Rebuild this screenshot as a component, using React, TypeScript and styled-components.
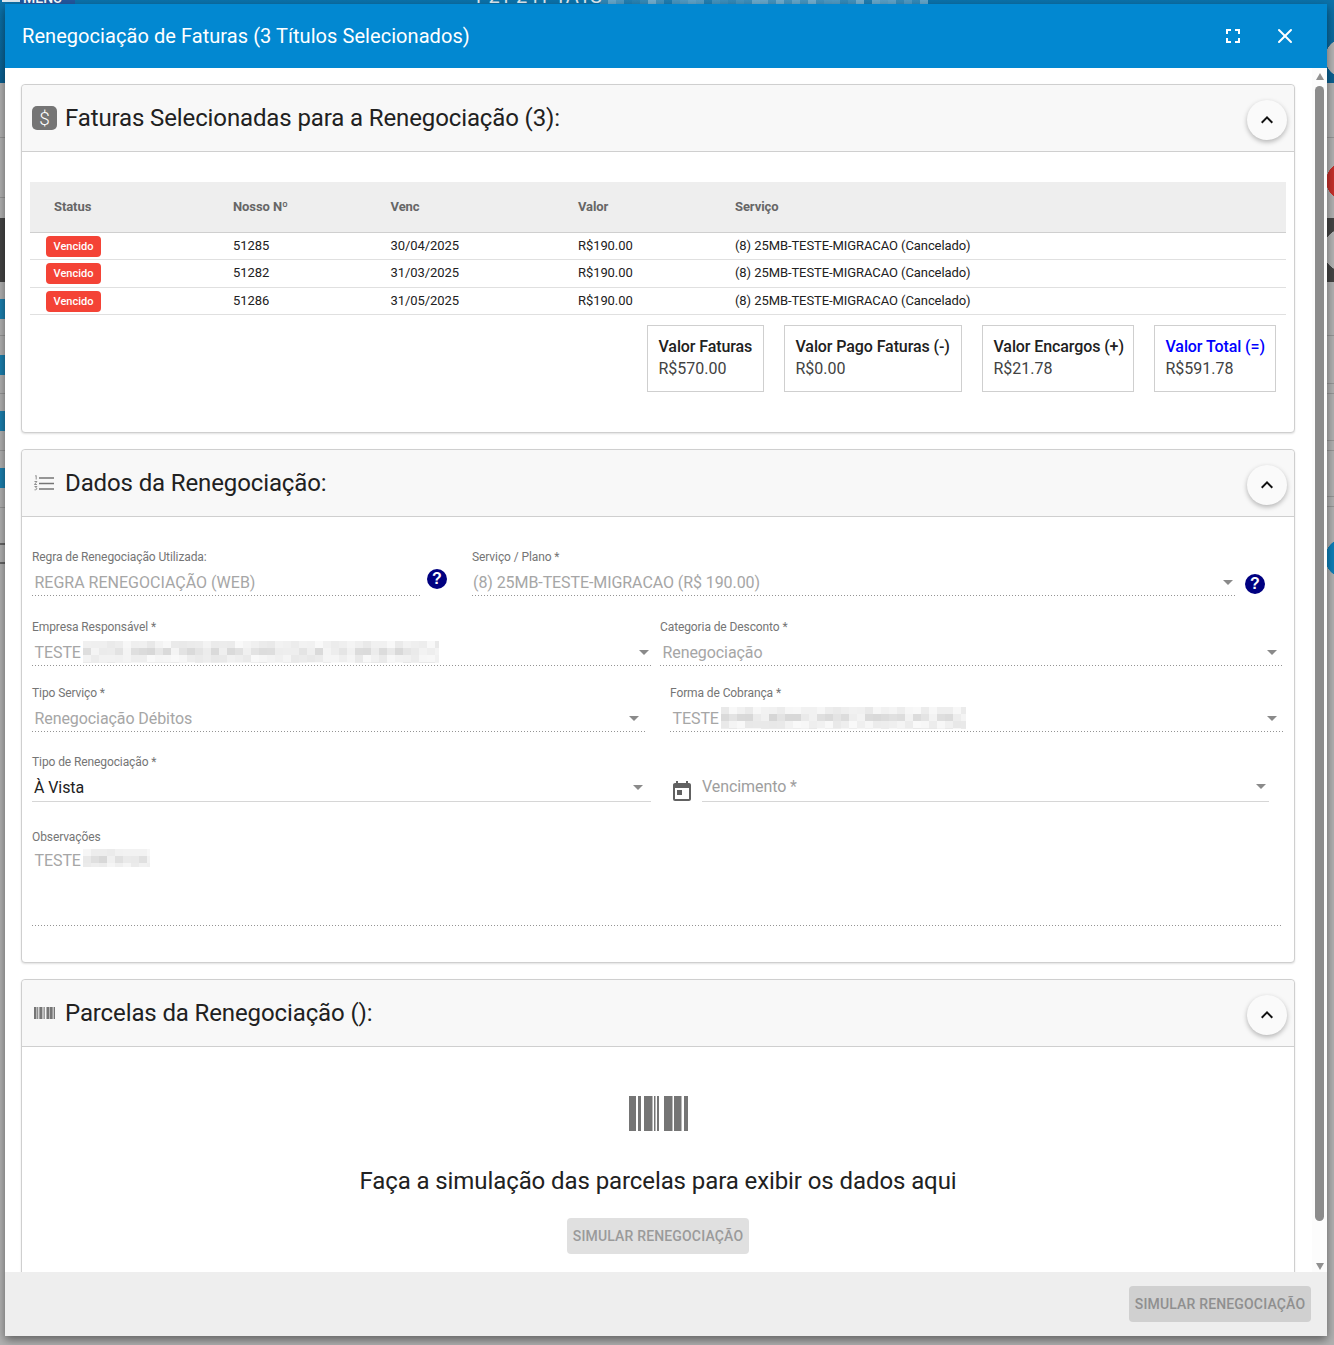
import React from "react";
import styled, { createGlobalStyle } from "styled-components";
import { X } from "lucide-react";
import { MdExpandLess, MdFullscreen, MdToday } from "react-icons/md";

const GlobalStyle = createGlobalStyle`
  html, body {
    margin: 0;
    padding: 0;
  }
  body {
    width: 1334px;
    height: 1345px;
    overflow: hidden;
    font-family: Roboto, "Liberation Sans", sans-serif;
    color: #212121;
  }
  * {
    box-sizing: border-box;
  }
`;

// repeatable noise for the pixelated bits of the screenshot
const noise = (a: number, b: number) => {
  const v = Math.sin(a * 12.9898 + b * 78.233) * 43758.5453;
  return v - Math.floor(v);
};

// the page behind the dialog only shows as thin strips, painted as background layers
const patch = (x: number, y: number, w: number, h: number, c: string) =>
  `linear-gradient(${c}, ${c}) ${x}px ${y}px / ${w}px ${h}px no-repeat`;
const disc = (x: number, y: number, r: number, c: string) =>
  `radial-gradient(circle ${r}px at ${x}px ${y}px, ${c} 98%, transparent) 0 0 / 100% 100% no-repeat`;

const topPixels = Array.from({ length: 41 }, (_, i) =>
  patch(600 + i * 8, 0, 8, 4, `rgba(255, 255, 255, ${(0.08 + noise(i, 4) * 0.35).toFixed(2)})`)
);

const backdropLayers = [
  ...topPixels,
  patch(2, 0, 18, 2, "#dfe8f0"),
  patch(20, 0, 55, 4, "#23579e"),
  patch(0, 299, 5, 20, "#1b7fae"),
  patch(0, 355, 5, 20, "#1b7fae"),
  patch(0, 411, 5, 20, "#1b7fae"),
  patch(0, 468, 5, 20, "#1b7fae"),
  patch(0, 137, 5, 1, "#969696"),
  patch(0, 197, 5, 1, "#969696"),
  patch(0, 218, 5, 64, "#444444"),
  patch(0, 335, 5, 1, "#969696"),
  patch(0, 393, 5, 1, "#969696"),
  patch(0, 450, 5, 1, "#969696"),
  patch(0, 507, 5, 1, "#969696"),
  patch(0, 543, 5, 2, "#666666"),
  patch(0, 562, 5, 2, "#666666"),
  disc(1345, 58, 20, "#b4b4b4"),
  disc(1345, 181, 19, "#c4302b"),
  disc(1345, 250, 22, "#b4b4b4"),
  disc(1345, 558, 20, "#0d7fb8"),
  patch(1327, 137, 7, 1, "#969696"),
  patch(1327, 218, 7, 64, "#444444"),
  patch(1327, 335, 7, 1, "#969696"),
  patch(1327, 383, 7, 1, "#969696"),
  patch(1327, 393, 7, 1, "#969696"),
  patch(1327, 440, 7, 1, "#969696"),
  patch(1327, 450, 7, 1, "#969696"),
  patch(1327, 496, 7, 1, "#969696"),
  patch(1327, 506, 7, 1, "#969696"),
  "linear-gradient(180deg, #0b72aa 0, #0a5f90 83px, transparent 83px)",
];

const Backdrop = styled.div`
  position: relative;
  width: 1334px;
  height: 1345px;
  overflow: hidden;
  background: ${backdropLayers.join(", ")};
  background-color: #b1b1b1;
`;

const PagePeek = styled.div`
  height: 4px;
  padding-left: 23px;
  overflow: hidden;
  display: flex;
  align-items: flex-end;
  color: #ffffff;
  font-size: 14px;
  font-weight: 500;
  line-height: 12px;
`;

const PeekTitle = styled.span`
  margin-left: 410px;
  font-size: 20px;
  font-weight: 400;
  line-height: 16px;
  color: #dfe8f0;
`;

const Dialog = styled.div`
  position: absolute;
  left: 5px;
  top: 4px;
  width: 1322px;
  height: 1332px;
  display: flex;
  flex-direction: column;
  background: #ffffff;
  border-radius: 2px;
  box-shadow: 0 4px 10px rgba(0, 0, 0, 0.45);
`;

const DialogBar = styled.header`
  flex: 0 0 64px;
  display: flex;
  align-items: center;
  padding: 0 30px 0 17px;
  background: #0288d1;
  color: #ffffff;
`;

const DialogTitle = styled.h1`
  flex: 1;
  margin: 0;
  font-size: 20px;
  font-weight: 400;
  letter-spacing: 0.06px;
`;

const BarAction = styled.span<{ $gap?: number }>`
  display: flex;
  margin-left: ${(p) => p.$gap ?? 0}px;
  color: #ffffff;
`;

const DialogMiddle = styled.div`
  flex: 1;
  min-height: 0;
  display: flex;
`;

const DialogContent = styled.div`
  flex: 1;
  min-width: 0;
  padding: 16px 17px 0 16px;
  overflow: hidden;
  display: flex;
  flex-direction: column;
  gap: 16px;
`;

const ScrollRail = styled.div`
  flex: 0 0 15px;
  display: flex;
  flex-direction: column;
  align-items: center;
  padding: 5px 3px 2px 3px;
  background: #fcfcfc;
`;

const RailArrow = styled.span<{ $down?: boolean }>`
  flex: none;
  width: 0;
  height: 0;
  border-left: 4.5px solid transparent;
  border-right: 4.5px solid transparent;
  ${(p) => (p.$down ? "border-top: 7px solid #909090;" : "border-bottom: 7px solid #909090;")}
`;

const RailThumb = styled.div`
  flex: 1;
  width: 9px;
  margin: 6px 0 42px;
  border-radius: 5px;
  background: #8c8c8c;
`;

const DialogFooter = styled.footer`
  flex: 0 0 64px;
  display: flex;
  align-items: center;
  justify-content: flex-end;
  padding-right: 16px;
  background: #eeeeee;
`;

const Card = styled.section`
  flex: none;
  border: 1px solid #cfcfcf;
  border-radius: 4px;
  background: #ffffff;
  box-shadow: 0 1px 2px rgba(0, 0, 0, 0.12);
`;

const CardHead = styled.div`
  height: 67px;
  display: flex;
  align-items: center;
  padding: 0 7px 0 10px;
  background: #f8f8f8;
  border-bottom: 1px solid #cfcfcf;
  border-radius: 4px 4px 0 0;
`;

const CardIcon = styled.span<{ $inset?: number }>`
  flex: 0 0 33px;
  display: flex;
  align-items: center;
  padding-left: ${(p) => p.$inset ?? 0}px;
`;

const DollarIcon = styled.span`
  width: 25px;
  height: 24px;
  display: flex;
  align-items: center;
  justify-content: center;
  border-radius: 5px;
  background: #757575;
  color: #ffffff;
  font-size: 19px;
  font-weight: 300;
`;

const CardTitle = styled.h2`
  flex: 1;
  margin: 0;
  font-size: 24px;
  font-weight: 400;
  letter-spacing: -0.12px;
  color: #212121;
`;

const RoundButton = styled.button`
  width: 40px;
  height: 40px;
  margin-top: 4px;
  padding: 0;
  display: flex;
  align-items: center;
  justify-content: center;
  border: 0;
  border-radius: 50%;
  background: #fafafa;
  color: #111111;
  box-shadow: 0 2px 5px rgba(0, 0, 0, 0.28);
`;

const InvoicesBody = styled.div`
  padding: 30px 8px 40px;
`;

const Table = styled.table`
  width: 100%;
  table-layout: fixed;
  border-collapse: collapse;
  font-size: 13px;
  letter-spacing: -0.08px;
`;

const HeadCell = styled.th<{ $w?: number; $first?: boolean }>`
  height: 50px;
  width: ${(p) => (p.$w ? `${p.$w}px` : "auto")};
  padding: 0 0 0 ${(p) => (p.$first ? 24 : 0)}px;
  background: #eeeeee;
  border-bottom: 1px solid #cfcfcf;
  color: #666666;
  font-size: 13px;
  font-weight: 700;
  text-align: left;
`;

const BodyRow = styled.tr<{ $h: number; $lift?: boolean }>`
  height: ${(p) => p.$h}px;
  border-bottom: 1px solid #e0e0e0;
  ${(p) => p.$lift && "td { padding-bottom: 2px; }"}
`;

const BodyCell = styled.td<{ $first?: boolean }>`
  padding: 0 0 0 ${(p) => (p.$first ? 16 : 0)}px;
  color: #212121;
`;

const StatusBadge = styled.span`
  display: inline-flex;
  align-items: center;
  justify-content: center;
  width: 55px;
  height: 21px;
  margin-top: 2px;
  vertical-align: middle;
  border-radius: 4px;
  background: #f44336;
  color: #ffffff;
  font-size: 11px;
  font-weight: 500;
  letter-spacing: 0;
`;

const Totals = styled.div`
  display: flex;
  justify-content: flex-end;
  gap: 20px;
  margin-top: 10px;
  padding-right: 10px;
`;

const TotalBox = styled.div<{ $w: number }>`
  flex: 0 0 ${(p) => p.$w}px;
  min-width: 0;
  height: 67px;
  padding: 10px 10.5px;
  border: 1px solid #cfcfcf;
  font-size: 16px;
  line-height: 22px;
`;

const TotalName = styled.div<{ $accent?: boolean }>`
  font-weight: 500;
  letter-spacing: -0.1px;
  color: ${(p) => (p.$accent ? "#0000ff" : "#212121")};
  white-space: nowrap;
`;

const TotalValue = styled.div`
  color: #424242;
`;

const FormBody = styled.div`
  padding: 33px 12px 36px 10px;
  display: flex;
  flex-direction: column;
`;

const FieldRow = styled.div<{ $top?: number }>`
  display: flex;
  align-items: flex-start;
  margin-top: ${(p) => p.$top ?? 0}px;
`;

const Field = styled.div<{ $w: number; $left?: number; $h?: number }>`
  flex: 0 0 ${(p) => p.$w}px;
  height: ${(p) => p.$h ?? 47}px;
  margin-left: ${(p) => p.$left ?? 0}px;
`;

const FieldLabel = styled.label`
  display: block;
  height: 14px;
  color: #757575;
  font-size: 12px;
  line-height: 14px;
  letter-spacing: -0.1px;
  white-space: nowrap;
`;

const FieldValue = styled.div<{ $solid?: boolean; $tall?: boolean; $inset?: number; $caps?: boolean }>`
  height: ${(p) => (p.$tall ? 82 : p.$solid ? 33 : 32)}px;
  padding: ${(p) => (p.$tall ? 5 : 7)}px 0 0 ${(p) => p.$inset ?? 2.5}px;
  display: flex;
  align-items: flex-start;
  font-size: 16px;
  line-height: 24px;
  letter-spacing: ${(p) => (p.$caps ? 0 : -0.08)}px;
  color: ${(p) => (p.$solid ? "#212121" : "#a6a6a6")};
  white-space: nowrap;
  ${(p) =>
    p.$solid
      ? "border-bottom: 1px solid #d6d6d6;"
      : `background: linear-gradient(to right, rgba(0, 0, 0, 0.42) 33%, transparent 0) left bottom / 3px 1px repeat-x;`}
`;

const DueValue = styled(FieldValue)`
  padding-top: 6px;
  color: #9e9e9e;
`;

const Caret = styled.span<{ $right?: number }>`
  flex: none;
  width: 0;
  height: 0;
  margin: 9px ${(p) => p.$right ?? 3}px 0 auto;
  border-left: 5px solid transparent;
  border-right: 5px solid transparent;
  border-top: 5px solid #8a8a8a;
`;

const HelpMark = styled.span<{ $left: number; $top: number }>`
  flex: none;
  width: 20px;
  height: 20px;
  margin: ${(p) => p.$top}px 0 0 ${(p) => p.$left}px;
  display: flex;
  align-items: center;
  justify-content: center;
  border-radius: 50%;
  background: #000080;
  color: #ffffff;
  font-family: "Liberation Sans", sans-serif;
  font-size: 16px;
  font-weight: 700;
  line-height: 20px;
`;

const CalendarMark = styled.span`
  flex: none;
  display: flex;
  margin: 25px 0 0 19px;
  color: #616161;
`;

const BlurredText = styled.svg`
  flex: none;
  margin-left: 2px;
`;

const InstallmentsBody = styled.div`
  padding: 49px 0 60px;
  display: flex;
  flex-direction: column;
  align-items: center;
`;

const EmptyMessage = styled.p`
  margin: 36px 0 23px;
  font-size: 24px;
  line-height: 28px;
  letter-spacing: -0.09px;
  color: #212121;
`;

const SimulateButton = styled.button<{ $footer?: boolean }>`
  width: 182px;
  height: 36px;
  padding: 0;
  border: 0;
  border-radius: 4px;
  background: ${(p) => (p.$footer ? "#d0d0d0" : "#e0e0e0")};
  color: ${(p) => (p.$footer ? "#8f8f8f" : "#9a9a9a")};
  font-family: inherit;
  font-size: 14px;
  font-weight: 500;
  letter-spacing: 0.16px;
`;

// pixelated patch where the screenshot hides a name
const Blurred = ({ width, height, seed = 1 }: { width: number; height: number; seed?: number }) => {
  const cells: React.ReactNode[] = [];
  for (let row = 0; row * 7 < height; row++) {
    for (let col = 0; col * 8 < width; col++) {
      const weight = row === 1 ? 0.75 : 0.42;
      cells.push(
        <rect
          key={`${row}-${col}`}
          x={col * 8}
          y={row * 7}
          width={8}
          height={7}
          fill="#c8c8c8"
          opacity={(0.25 + noise(col + seed * 17, row + seed) * 0.75) * weight}
        />
      );
    }
  }
  return (
    <BlurredText width={width} height={height} viewBox={`0 0 ${width} ${height}`}>
      {cells}
    </BlurredText>
  );
};

const BarcodeIcon = ({ width, height }: { width: number; height: number }) => (
  <svg width={width} height={height} viewBox="0 0 59 35" preserveAspectRatio="none" fill="#757575">
    <rect x="0" y="0" width="7" height="35" />
    <rect x="9" y="0" width="3" height="35" />
    <rect x="15" y="0" width="8.5" height="35" />
    <rect x="25" y="0" width="1.5" height="35" />
    <rect x="28" y="0" width="2" height="35" />
    <rect x="35" y="0" width="8.5" height="35" />
    <rect x="45" y="0" width="7.5" height="35" />
    <rect x="55" y="0" width="4" height="35" />
  </svg>
);

const NumberedListIcon = () => (
  <svg width="20" height="16" viewBox="0 0 20 16" fill="none" stroke="#757575">
    <path d="M5 3h15M5 8.5h15M5 14h15" strokeWidth="1.7" />
    <path d="M1.2 1l1-.5v4M0.5 6.5h2.4l-2.4 3h2.4M0.5 11.5h2.4l-1.2 1.3c1.6 0 1.6 2.4-1.2 2" strokeWidth="0.8" />
  </svg>
);

const invoices = [
  { number: "51285", due: "30/04/2025", h: 27 },
  { number: "51282", due: "31/03/2025", h: 28, lift: true },
  { number: "51286", due: "31/05/2025", h: 27 },
];

const totals = [
  { name: "Valor Faturas", value: "R$570.00", width: 117 },
  { name: "Valor Pago Faturas (-)", value: "R$0.00", width: 178 },
  { name: "Valor Encargos (+)", value: "R$21.78", width: 152 },
  { name: "Valor Total (=)", value: "R$591.78", width: 122, accent: true },
];

const Collapse = () => (
  <RoundButton aria-label="Recolher">
    <MdExpandLess size={24} />
  </RoundButton>
);

export default function App() {
  return (
    <>
      <GlobalStyle />
      <Backdrop>
        <PagePeek>
          MENU
          <PeekTitle>1 21 241 1A1S</PeekTitle>
        </PagePeek>
        <Dialog>
          <DialogBar>
            <DialogTitle>Renegociação de Faturas (3 Títulos Selecionados)</DialogTitle>
            <BarAction>
              <MdFullscreen size={24} />
            </BarAction>
            <BarAction $gap={28}>
              <X size={24} strokeWidth={2} />
            </BarAction>
          </DialogBar>

          <DialogMiddle>
            <DialogContent>
              <Card>
                <CardHead>
                  <CardIcon>
                    <DollarIcon>$</DollarIcon>
                  </CardIcon>
                  <CardTitle>Faturas Selecionadas para a Renegociação (3):</CardTitle>
                  <Collapse />
                </CardHead>
                <InvoicesBody>
                  <Table>
                    <thead>
                      <tr>
                        <HeadCell $w={203} $first>Status</HeadCell>
                        <HeadCell $w={157.5}>Nosso Nº</HeadCell>
                        <HeadCell $w={187.5}>Venc</HeadCell>
                        <HeadCell $w={157}>Valor</HeadCell>
                        <HeadCell>Serviço</HeadCell>
                      </tr>
                    </thead>
                    <tbody>
                      {invoices.map((invoice) => (
                        <BodyRow key={invoice.number} $h={invoice.h} $lift={invoice.lift}>
                          <BodyCell $first>
                            <StatusBadge>Vencido</StatusBadge>
                          </BodyCell>
                          <BodyCell>{invoice.number}</BodyCell>
                          <BodyCell>{invoice.due}</BodyCell>
                          <BodyCell>R$190.00</BodyCell>
                          <BodyCell>(8) 25MB-TESTE-MIGRACAO (Cancelado)</BodyCell>
                        </BodyRow>
                      ))}
                    </tbody>
                  </Table>
                  <Totals>
                    {totals.map((total) => (
                      <TotalBox key={total.name} $w={total.width}>
                        <TotalName $accent={total.accent}>{total.name}</TotalName>
                        <TotalValue>{total.value}</TotalValue>
                      </TotalBox>
                    ))}
                  </Totals>
                </InvoicesBody>
              </Card>

              <Card>
                <CardHead>
                  <CardIcon $inset={2}>
                    <NumberedListIcon />
                  </CardIcon>
                  <CardTitle>Dados da Renegociação:</CardTitle>
                  <Collapse />
                </CardHead>
                <FormBody>
                  <FieldRow>
                    <Field $w={389}>
                      <FieldLabel>Regra de Renegociação Utilizada:</FieldLabel>
                      <FieldValue $caps>REGRA RENEGOCIAÇÃO (WEB)</FieldValue>
                    </Field>
                    <HelpMark $left={6} $top={19}>?</HelpMark>
                    <Field $w={764} $left={25}>
                      <FieldLabel>Serviço / Plano *</FieldLabel>
                      <FieldValue $inset={1}>
                        (8) 25MB-TESTE-MIGRACAO (R$ 190.00)
                        <Caret />
                      </FieldValue>
                    </Field>
                    <HelpMark $left={9} $top={24}>?</HelpMark>
                  </FieldRow>

                  <FieldRow $top={23}>
                    <Field $w={620}>
                      <FieldLabel>Empresa Responsável *</FieldLabel>
                      <FieldValue>
                        TESTE
                        <Blurred width={356} height={22} seed={3} />
                        <Caret />
                      </FieldValue>
                    </Field>
                    <Field $w={622} $left={8}>
                      <FieldLabel>Categoria de Desconto *</FieldLabel>
                      <FieldValue>
                        Renegociação
                        <Caret $right={5} />
                      </FieldValue>
                    </Field>
                  </FieldRow>

                  <FieldRow $top={19}>
                    <Field $w={614}>
                      <FieldLabel>Tipo Serviço *</FieldLabel>
                      <FieldValue>
                        Renegociação Débitos
                        <Caret $right={7} />
                      </FieldValue>
                    </Field>
                    <Field $w={613} $left={24}>
                      <FieldLabel>Forma de Cobrança *</FieldLabel>
                      <FieldValue>
                        TESTE
                        <Blurred width={245} height={22} seed={5} />
                        <Caret $right={6} />
                      </FieldValue>
                    </Field>
                  </FieldRow>

                  <FieldRow $top={22}>
                    <Field $w={619}>
                      <FieldLabel>Tipo de Renegociação *</FieldLabel>
                      <FieldValue $solid $inset={2}>
                        À Vista
                        <Caret $right={8} />
                      </FieldValue>
                    </Field>
                    <CalendarMark>
                      <MdToday size={24} />
                    </CalendarMark>
                    <Field $w={567} $left={8}>
                      <FieldLabel />
                      <DueValue $solid $inset={0}>
                        Vencimento *
                        <Caret />
                      </DueValue>
                    </Field>
                  </FieldRow>

                  <FieldRow $top={26}>
                    <Field $w={1250} $h={96}>
                      <FieldLabel>Observações</FieldLabel>
                      <FieldValue $tall>
                        TESTE
                        <Blurred width={67} height={18} seed={2} />
                      </FieldValue>
                    </Field>
                  </FieldRow>
                </FormBody>
              </Card>

              <Card>
                <CardHead>
                  <CardIcon $inset={2}>
                    <BarcodeIcon width={21} height={12} />
                  </CardIcon>
                  <CardTitle>Parcelas da Renegociação ():</CardTitle>
                  <Collapse />
                </CardHead>
                <InstallmentsBody>
                  <BarcodeIcon width={59} height={35} />
                  <EmptyMessage>Faça a simulação das parcelas para exibir os dados aqui</EmptyMessage>
                  <SimulateButton disabled>SIMULAR RENEGOCIAÇÃO</SimulateButton>
                </InstallmentsBody>
              </Card>
            </DialogContent>
            <ScrollRail>
              <RailArrow />
              <RailThumb />
              <RailArrow $down />
            </ScrollRail>
          </DialogMiddle>

          <DialogFooter>
            <SimulateButton $footer disabled>SIMULAR RENEGOCIAÇÃO</SimulateButton>
          </DialogFooter>
        </Dialog>
      </Backdrop>
    </>
  );
}
